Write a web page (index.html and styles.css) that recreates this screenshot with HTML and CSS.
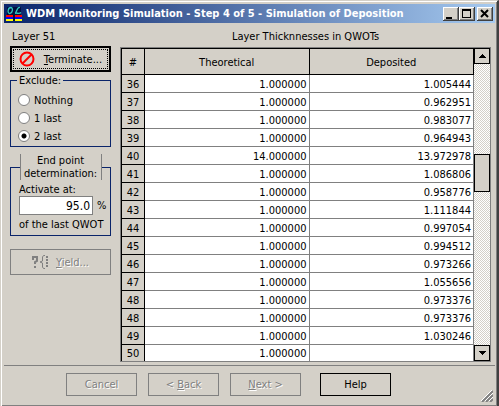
FILE: index.html
```
<!DOCTYPE html>
<html lang="en">
<head>
<meta charset="utf-8">
<title>WDM Monitoring Simulation</title>
<link rel="stylesheet" href="styles.css">
</head>
<body>
<div class="window">
  <header class="titlebar">
    <svg class="logo" width="16" height="16" viewBox="0 0 16 16" aria-hidden="true">
      <path d="M1 1h14v9H1z" fill="#001040"/>
      <g fill="none" stroke="#2fc6c0" stroke-width="1.3">
        <path d="M5 1.500C2 1.500 1 7 3.500 7.500C6.500 7.500 7.500 2 5 1.500M14 1.500C11 0.500 10.500 7 9 7.300C11 6.500 13 8.500 15 6.500"/>
      </g>
      <path d="M0 9h7v2H0zM9 9h7v2H9z" fill="#ff0000"/><path d="M0 11h7v2H0zM9 11h7v2H9z" fill="#0000ff"/>
      <path d="M0 13h16v2H0z" fill="#ffff00"/><path d="M7 9h2v6H7z" fill="#001040"/>
    </svg>
    <h1>WDM Monitoring Simulation - Step 4 of 5 - Simulation of Deposition</h1>
    <div class="window-buttons">
      <button type="button" aria-label="Minimize"><svg width="16" height="14"><path d="M3 10h6v2H3z"/></svg></button><button type="button" aria-label="Maximize"><svg width="16" height="14"><path d="M3 2h9v9H3zM4 4v6h7V4z" fill-rule="evenodd"/></svg></button>
      <button type="button" aria-label="Close"><svg width="16" height="14"><path d="M4 3l7 7M11 3l-7 7" stroke="#000" stroke-width="2"/></svg></button>
    </div>
  </header>
  <main class="content">
    <aside class="sidebar">
      <p class="caption">Layer 51</p>
      <button type="button" class="button terminate"><svg width="16" height="16" viewBox="0 0 16 16" aria-hidden="true"><g fill="none" stroke="#f00" stroke-width="2"><circle cx="8" cy="8" r="6.500"/><path d="M3.500 12.500l9-9"/></g></svg><span><u>T</u>erminate...</span></button>
      <fieldset class="exclude">
        <legend>Exclude:</legend>
        <label><input type="radio" name="exclude">Nothing</label>
        <label><input type="radio" name="exclude">1 last</label>
        <label><input type="radio" name="exclude" checked>2 last</label>
      </fieldset>
      <fieldset class="endpoint">
        <legend>End point determination:</legend>
        <label for="percent">Activate at:</label>
        <div class="percent"><input id="percent" type="text" value="95.0"><span>%</span></div>
        <p>of the last QWOT</p>
      </fieldset>
      <button type="button" class="button yield" disabled><svg width="18" height="16" viewBox="0 0 18 16" aria-hidden="true"><g fill="none" stroke="#808080" stroke-width="2"><path d="M1 6V3h4v4L3 8v2M3 12v2"/><path d="M13 1.500h-1.500L10.500 3v4L8 8l2.500 1v4l1 1.500H13" stroke-width="1"/><path d="M15 2v12" stroke-dasharray="2 1"/></g></svg><span><u>Y</u>ield...</span></button>
    </aside>
    <section class="layers">
      <h2 class="caption">Layer Thicknnesses in QWOTs</h2>
      <div class="grid">
        <div class="viewport">
        <table>
          <thead><tr><th class="num">#</th><th>Theoretical</th><th>Deposited</th></tr></thead>
          <tbody>
            <tr><th>36</th><td>1.000000</td><td>1.005444</td></tr>
            <tr><th>37</th><td>1.000000</td><td>0.962951</td></tr>
            <tr><th>38</th><td>1.000000</td><td>0.983077</td></tr>
            <tr><th>39</th><td>1.000000</td><td>0.964943</td></tr>
            <tr><th>40</th><td>14.000000</td><td>13.972978</td></tr>
            <tr><th>41</th><td>1.000000</td><td>1.086806</td></tr>
            <tr><th>42</th><td>1.000000</td><td>0.958776</td></tr>
            <tr><th>43</th><td>1.000000</td><td>1.111844</td></tr>
            <tr><th>44</th><td>1.000000</td><td>0.997054</td></tr>
            <tr><th>45</th><td>1.000000</td><td>0.994512</td></tr>
            <tr><th>46</th><td>1.000000</td><td>0.973266</td></tr>
            <tr><th>47</th><td>1.000000</td><td>1.055656</td></tr>
            <tr><th>48</th><td>1.000000</td><td>0.973376</td></tr>
            <tr><th>48</th><td>1.000000</td><td>0.973376</td></tr>
            <tr><th>49</th><td>1.000000</td><td>1.030246</td></tr>
            <tr><th>50</th><td>1.000000</td><td></td></tr>
          </tbody>
        </table>
        </div>
        <div class="scrollbar">
          <button type="button" aria-label="Scroll up"><svg width="7" height="4"><path d="M3 0h1v1h1v1h1v1h1v1H0V3h1V2h1V1h1z"/></svg></button>
          <div class="track"><div class="before"></div><div class="thumb"></div></div>
          <button type="button" aria-label="Scroll down"><svg width="7" height="4"><path d="M0 0h7v1H6v1H5v1H4v1H3V3H2V2H1V1H0z"/></svg></button>
        </div>
      </div>
    </section>
  </main>
  <footer class="actions">
    <button type="button" class="button" disabled>Cancel</button>
    <button type="button" class="button" disabled><span>&lt; <u>B</u>ack</span></button>
    <button type="button" class="button" disabled><span><u>N</u>ext &gt;</span></button>
    <button type="button" class="button">Help</button>
    <svg class="grip" width="12" height="12" aria-hidden="true"><g stroke-width="2" stroke="#808080"><path d="M1 12L12 1M5 12l7-7M9 12l3-3"/></g><path d="M0 11L11 0M4 11l8-8M8 11l4-4" stroke="#fff"/></svg>
  </footer>
</div>
</body>
</html>
```
FILE: styles.css
```
* { box-sizing: border-box; }
body {
  margin: 0;
  background: #d4d0c8;
  color: #000;
  font: 11px/13px "DejaVu Sans Condensed", "DejaVu Sans", sans-serif;
}
button, input { font: inherit; color: inherit; }
h1, h2, p { margin: 0; font-size: inherit; font-weight: normal; }

.window {
  display: flex;
  flex-direction: column;
  min-height: 100vh;
  padding: 3px 2px 1px 3px;
  border: 1px solid #d4d0c8;
  border-right: 2px solid #404040;
  border-bottom: 2px solid #404040;
  box-shadow: inset 1px 1px #fff, inset -1px -1px #808080;
}
.titlebar {
  display: flex;
  align-items: center;
  height: 19px;
  gap: 4px;
  padding: 0 2px;
  background: linear-gradient(90deg, #0a246a, #a6caf0);
  color: #fff;
}
.titlebar h1 { flex: 1; font-weight: bold; white-space: nowrap; }
.window-buttons { display: flex; }
.window-buttons button {
  width: 16px;
  height: 14px;
  padding: 0;
  border: 0;
  background: #d4d0c8;
  box-shadow: inset -1px -1px #404040, inset 1px 1px #fff, inset -2px -2px #808080;
}
.window-buttons button:last-child { margin-left: 2px; }
.window-buttons svg { display: block; }

.content { display: flex; flex: 1; padding: 0 4px 3px 6px; gap: 9px; }
.caption { padding: 7px 0 3px; line-height: 13px; text-align: center; }
.sidebar { width: 101px; }
.sidebar .caption { padding-left: 2px; text-align: left; }

.button {
  display: flex;
  align-items: center;
  justify-content: center;
  width: 71px;
  height: 23px;
  padding: 0;
  border: 1px solid #000;
  background: #d4d0c8;
  white-space: nowrap;
}
.button:disabled { border-color: #808080; color: #808080; text-shadow: 1px 1px #fff; }
.terminate {
  width: 100%;
  height: 26px;
  gap: 9px;
  border-width: 2px;
  outline: 1px dotted #000;
  outline-offset: -4px;
}
.yield { width: 100%; height: 26px; gap: 6px; margin-top: 13px; }

fieldset { margin: 0; border: 1px solid #0a246a; min-width: 0; }
.exclude { margin-top: 2px; padding: 4px 7px 1px; }
.exclude legend { margin-left: -1px; padding: 0 2px; }
.exclude label { display: flex; align-items: center; gap: 4px; height: 18px; }
.exclude input {
  appearance: none;
  width: 12px;
  height: 12px;
  margin: 0;
  border: 1px solid #808080;
  border-radius: 50%;
  background: #fff;
}
.exclude input:checked { background: radial-gradient(circle, #000 2px, #fff 3px); }
.endpoint { margin-top: 7px; padding: 0 8px 4px; }
.endpoint legend {
  width: 82px;
  padding: 0;
  border: solid #808080;
  border-width: 0 1px;
  text-align: center;
}
.endpoint label { display: block; margin-top: 3px; }
.endpoint p { white-space: nowrap; }
.percent { display: flex; align-items: center; gap: 4px; margin: 0 0 3px; }
.percent input {
  width: 74px;
  height: 19px;
  padding: 0 2px;
  border: 1px solid #808080;
  background: #fff;
  font-size: 12px;
  text-align: right;
}

.layers { flex: 1; display: flex; flex-direction: column; min-width: 0; }
.grid { display: flex; margin-top: 1px; border: 1px solid #808080; }
.viewport { flex: 1; border: solid #000; border-width: 1px 0 0 1px; }
table { width: 100%; border-spacing: 0; table-layout: fixed; }
th { font-weight: normal; padding: 1px 0 0; background: #d4d0c8; }
thead th { height: 26px; border: solid #000; border-width: 0 1px 1px 0; }
.num { width: 23px; }
tbody th, td { height: 18px; line-height: 13px; }
tbody th { border: solid #000; border-width: 0 1px 1px 0; }
td { padding: 1px 2px 0; border: solid #808080; border-width: 0 1px 1px 0; background: #fff; text-align: right; }
tbody tr:last-child > * { height: 16px; border-bottom: 0; }
.scrollbar { display: flex; flex-direction: column; width: 16px; }
.scrollbar button {
  display: flex;
  align-items: center;
  justify-content: center;
  width: 16px;
  height: 16px;
  padding: 0;
  border: 1px solid #000;
  background: #d4d0c8;
}
.track {
  flex: 1;
  display: flex;
  flex-direction: column;
  background: repeating-conic-gradient(#fff 0 25%, #d4d0c8 0 50%) 0 0 / 2px 2px;
}
.before { flex: 90; }
.track::after { content: ""; flex: 153; }
.thumb { height: 38px; border: 1px solid #000; background: #d4d0c8; }

.actions {
  display: flex;
  justify-content: center;
  gap: 11px;
  position: relative;
  padding: 7px 42px 9px 0;
  border-top: 1px solid #808080;
}
.actions .button:last-of-type { margin-left: 8px; }
.grip { position: absolute; right: 2px; bottom: 3px; }
```
